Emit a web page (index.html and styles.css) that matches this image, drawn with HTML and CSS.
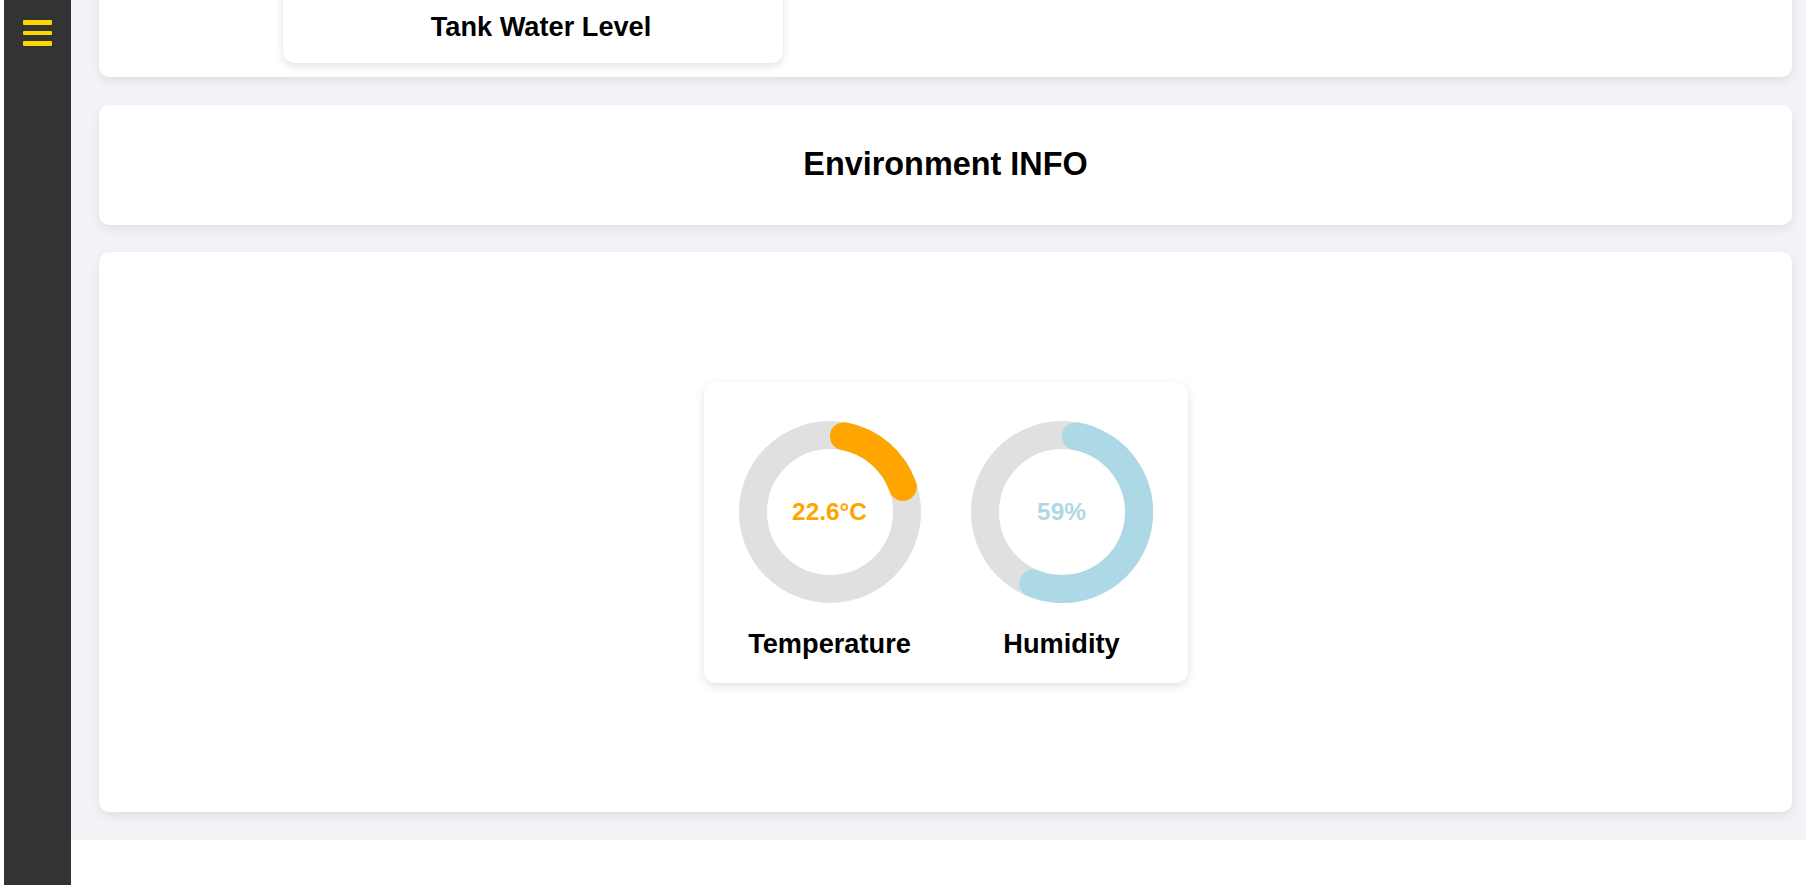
FILE: index.html
```html
<!DOCTYPE html>
<html lang="en">
<head>
<meta charset="utf-8">
<title>Dashboard</title>
<link rel="stylesheet" href="styles.css">
</head>
<body>
  <aside class="sidebar">
    <button class="menu-btn" aria-label="Menu">
      <span class="bar"></span>
      <span class="bar"></span>
      <span class="bar"></span>
    </button>
  </aside>
  <main class="main">
    <section class="card card-tanks">
      <div class="tank-card">
        <div class="tank-visual"></div>
        <h3 class="tank-title">Tank Water Level</h3>
      </div>
    </section>
    <section class="card card-heading">
      <h2 class="section-title">Environment INFO</h2>
    </section>
    <section class="card card-gauges">
      <div class="gauge-card">
        <div class="gauge">
          <div class="gauge-dial">
            <svg class="gauge-svg" width="182" height="182" viewBox="-91 -91 182 182">
              <circle class="track" cx="0" cy="0" r="77"></circle>
              <path class="arc arc-temp" d="M 13.9 -75.7 A 77 77 0 0 1 72.8 -25.1"></path>
            </svg>
            <div class="gauge-value value-temp">22.6°C</div>
          </div>
          <div class="gauge-label">Temperature</div>
        </div>
        <div class="gauge">
          <div class="gauge-dial">
            <svg class="gauge-svg" width="182" height="182" viewBox="-91 -91 182 182">
              <circle class="track" cx="0" cy="0" r="77"></circle>
              <path class="arc arc-hum" d="M 13.9 -75.7 A 77 77 0 1 1 -28.8 71.4"></path>
            </svg>
            <div class="gauge-value value-hum">59%</div>
          </div>
          <div class="gauge-label">Humidity</div>
        </div>
      </div>
    </section>
  </main>
</body>
</html>
```

FILE: styles.css
```css
* {
  box-sizing: border-box;
}

html, body {
  margin: 0;
  padding: 0;
}

body {
  display: flex;
  align-items: flex-start;
  padding-left: 4px;
  background: #ffffff;
  font-family: "Liberation Sans", Arial, sans-serif;
  color: #000;
  height: 885px;
  overflow: hidden;
}

.sidebar {
  flex: 0 0 67px;
  width: 67px;
  height: 100vh;
  background: #333333;
  display: flex;
  justify-content: center;
  padding-top: 20px;
}

.menu-btn {
  background: none;
  border: none;
  padding: 0;
  width: 29px;
  height: 26px;
  display: flex;
  flex-direction: column;
  justify-content: space-between;
  cursor: pointer;
}

.bar {
  display: block;
  width: 29px;
  height: 4.6px;
  background: #ffd700;
  border-radius: 1px;
}

.main {
  flex: 1 1 auto;
  background: #f2f2f7;
  padding: 0 14px 28px 28px;
  display: flex;
  flex-direction: column;
  gap: 27.5px;
}

.card {
  background: #ffffff;
  border-radius: 10px;
  box-shadow: 0 4px 10px rgba(0, 0, 0, 0.08);
}

.card-tanks {
  margin-top: -200px;
  display: flex;
  padding: 20px 20px 14px 184px;
}

.tank-card {
  width: 500px;
  background: #ffffff;
  border-radius: 12px;
  box-shadow: 0 3px 10px rgba(0, 0, 0, 0.12);
  padding: 0 0 21px 16px;
}

.tank-visual {
  height: 191px;
}

.tank-title {
  margin: 0;
  font-size: 27.2px;
  font-weight: bold;
  text-align: center;
  line-height: 31px;
}

.card-heading {
  padding: 41px 0 42px;
}

.section-title {
  margin: 0;
  font-size: 32.4px;
  font-weight: bold;
  text-align: center;
  line-height: 37px;
}

.card-gauges {
  height: 560px;
  display: flex;
  align-items: center;
  justify-content: center;
}

.gauge-card {
  display: flex;
  gap: 32px;
  padding: 39px 26px 24px;
  background: #ffffff;
  border-radius: 12px;
  box-shadow: 0 3px 10px rgba(0, 0, 0, 0.12);
}

.gauge {
  width: 200px;
  display: flex;
  flex-direction: column;
  align-items: center;
}

.gauge-dial {
  position: relative;
  width: 182px;
  height: 182px;
}

.gauge-svg {
  display: block;
}

.track {
  fill: none;
  stroke: #e0e0e0;
  stroke-width: 28;
}

.arc {
  fill: none;
  stroke-width: 28;
  stroke-linecap: round;
}

.arc-temp {
  stroke: #ffa500;
}

.arc-hum {
  stroke: #add8e6;
}

.gauge-value {
  position: absolute;
  inset: 0;
  display: flex;
  align-items: center;
  justify-content: center;
  font-size: 24.4px;
  font-weight: bold;
}

.value-temp {
  color: #ffa500;
}

.value-hum {
  color: #add8e6;
}

.gauge-label {
  margin-top: 25px;
  font-size: 27.2px;
  font-weight: bold;
  line-height: 31px;
}
```
